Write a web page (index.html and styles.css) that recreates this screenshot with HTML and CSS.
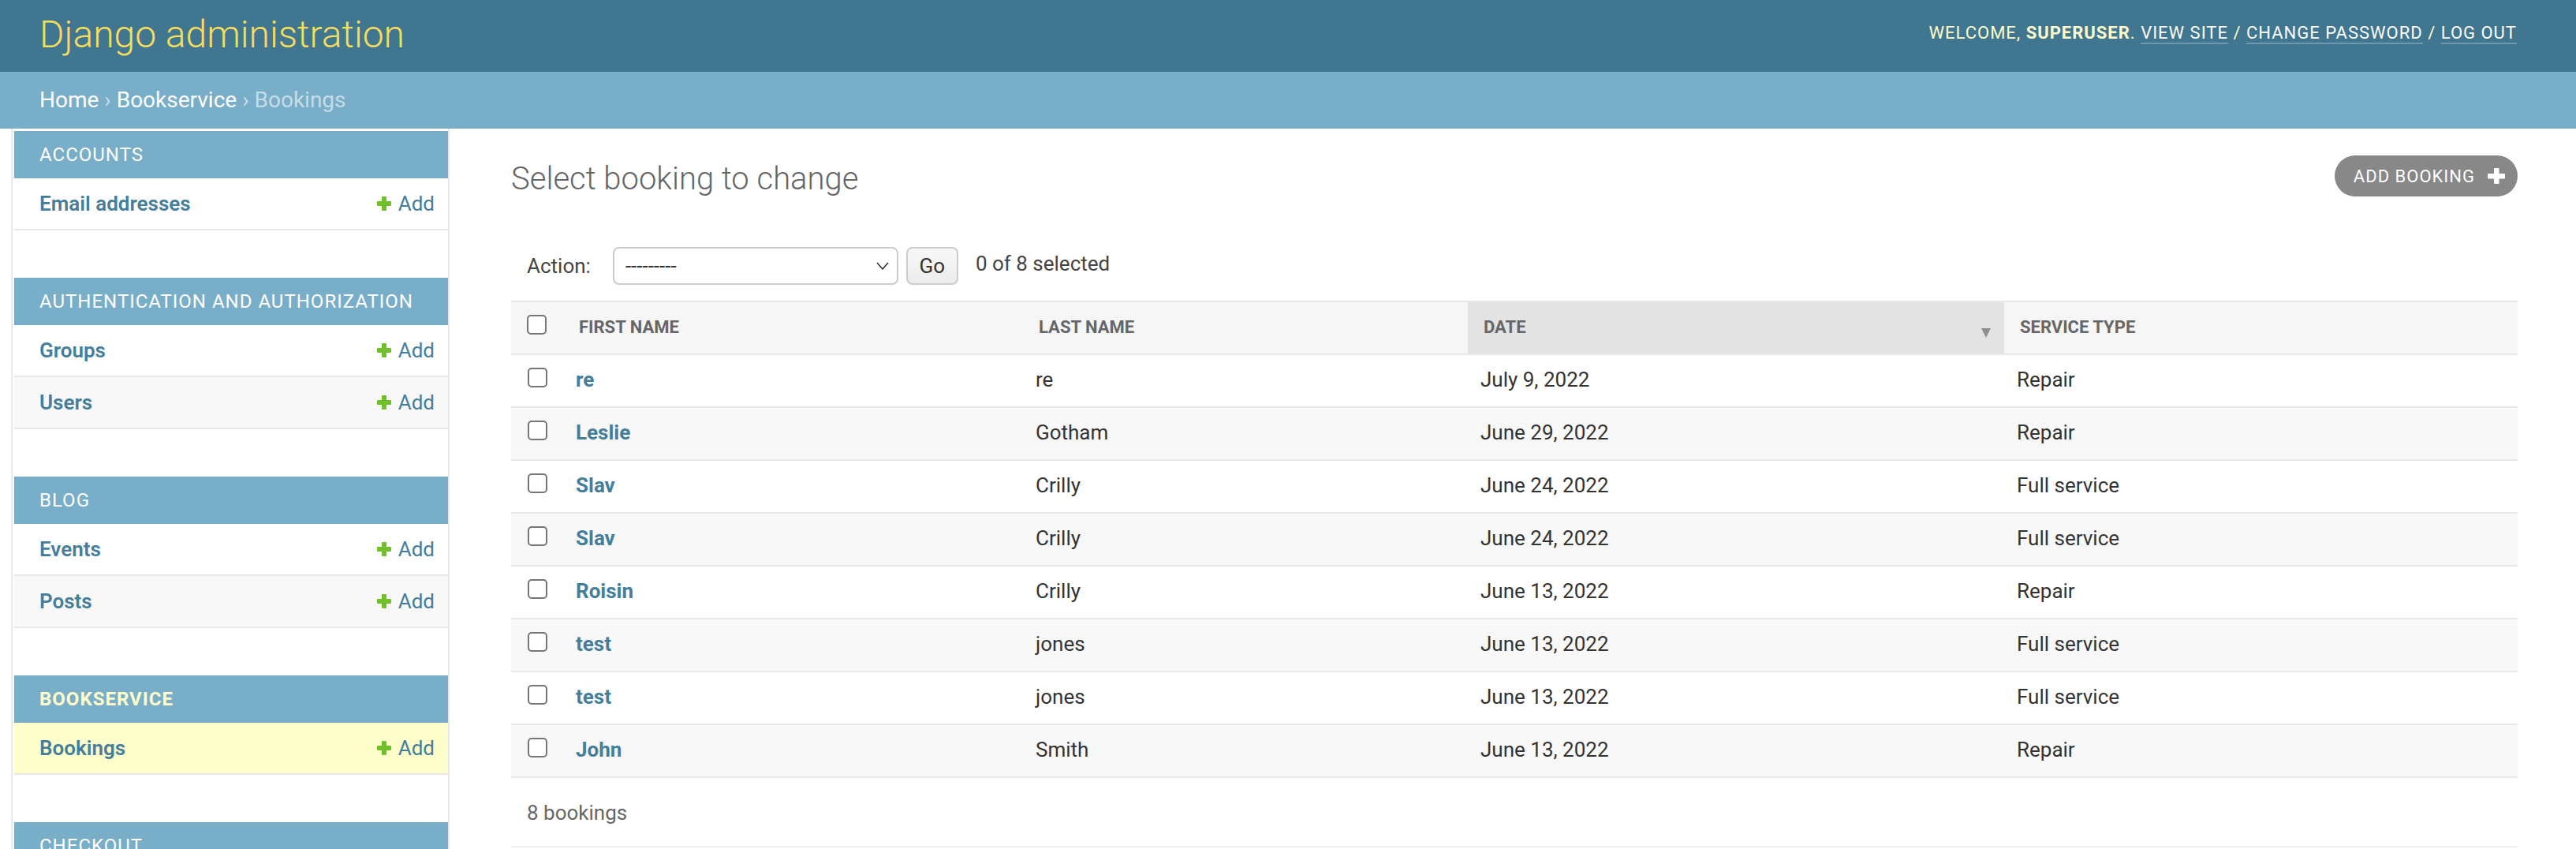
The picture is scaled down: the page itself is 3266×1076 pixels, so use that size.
FILE: index.html
```html
<!DOCTYPE html>
<html lang="en">
<head>
<meta charset="utf-8">
<title>Select booking to change | Django site admin</title>
<link rel="stylesheet" href="styles.css">
</head>
<body>
<header class="header">
  <h1 class="branding">Django administration</h1>
  <div class="user-tools">
    <span class="welcome">Welcome, <strong>superuser</strong>.</span>
    <a class="utl" href="#">View site</a> <span class="sep">/</span>
    <a class="utl" href="#">Change password</a> <span class="sep">/</span>
    <a class="utl" href="#">Log out</a>
  </div>
</header>
<nav class="breadcrumbs">
  <a href="#">Home</a> <span class="bsep">›</span> <a href="#">Bookservice</a> <span class="bsep">›</span> <span class="bcur">Bookings</span>
</nav>
<div class="main">
  <div class="toggle"></div>
  <aside class="sidebar">
    <div class="module">
      <div class="caption">Accounts</div>
      <div class="srow"><a class="sname" href="#">Email addresses</a><a class="addlink" href="#"><svg class="plus" viewBox="0 0 20 18"><rect x="7" y="0" width="6" height="18" rx="1"/><rect x="1" y="6" width="18" height="6" rx="1"/></svg>Add</a></div>
    </div>
    <div class="module">
      <div class="caption">Authentication and Authorization</div>
      <div class="srow"><a class="sname" href="#">Groups</a><a class="addlink" href="#"><svg class="plus" viewBox="0 0 20 18"><rect x="7" y="0" width="6" height="18" rx="1"/><rect x="1" y="6" width="18" height="6" rx="1"/></svg>Add</a></div>
      <div class="srow alt"><a class="sname" href="#">Users</a><a class="addlink" href="#"><svg class="plus" viewBox="0 0 20 18"><rect x="7" y="0" width="6" height="18" rx="1"/><rect x="1" y="6" width="18" height="6" rx="1"/></svg>Add</a></div>
    </div>
    <div class="module">
      <div class="caption">Blog</div>
      <div class="srow"><a class="sname" href="#">Events</a><a class="addlink" href="#"><svg class="plus" viewBox="0 0 20 18"><rect x="7" y="0" width="6" height="18" rx="1"/><rect x="1" y="6" width="18" height="6" rx="1"/></svg>Add</a></div>
      <div class="srow alt"><a class="sname" href="#">Posts</a><a class="addlink" href="#"><svg class="plus" viewBox="0 0 20 18"><rect x="7" y="0" width="6" height="18" rx="1"/><rect x="1" y="6" width="18" height="6" rx="1"/></svg>Add</a></div>
    </div>
    <div class="module">
      <div class="caption current">Bookservice</div>
      <div class="srow current-row"><a class="sname" href="#">Bookings</a><a class="addlink" href="#"><svg class="plus" viewBox="0 0 20 18"><rect x="7" y="0" width="6" height="18" rx="1"/><rect x="1" y="6" width="18" height="6" rx="1"/></svg>Add</a></div>
    </div>
    <div class="module">
      <div class="caption">Checkout</div>
    </div>
  </aside>
  <main class="content">
    <div class="title-row">
      <h1 class="page-title">Select booking to change</h1>
      <a class="addbtn" href="#">Add booking<svg class="wplus" viewBox="0 0 22 20"><rect x="8" y="0" width="6.5" height="20" rx="1"/><rect x="0" y="7" width="22" height="6.5" rx="1"/></svg></a>
    </div>
    <div class="actions">
      <span class="alabel">Action:</span>
      <div class="select"><span>---------</span><svg class="chev" viewBox="0 0 16 10"><polyline points="1,1 8,9 15,1" fill="none" stroke="#333" stroke-width="1.6"/></svg></div>
      <button class="go">Go</button>
      <span class="counter">0 of 8 selected</span>
    </div>
    <table class="results">
      <colgroup>
        <col class="c-cb"><col class="c-first"><col class="c-last"><col class="c-date"><col class="c-serv">
      </colgroup>
      <thead>
        <tr>
          <th class="th-cb"><span class="cb"></span></th>
          <th>First name</th>
          <th>Last name</th>
          <th class="sorted"><div class="sorted-in"><span>Date</span><span class="arrow"></span></div></th>
          <th>Service type</th>
        </tr>
      </thead>
      <tbody>
        <tr><td class="td-cb"><span class="cb"></span></td><td class="fn"><a href="#">re</a></td><td>re</td><td>July 9, 2022</td><td>Repair</td></tr>
        <tr class="row2"><td class="td-cb"><span class="cb"></span></td><td class="fn"><a href="#">Leslie</a></td><td>Gotham</td><td>June 29, 2022</td><td>Repair</td></tr>
        <tr><td class="td-cb"><span class="cb"></span></td><td class="fn"><a href="#">Slav</a></td><td>Crilly</td><td>June 24, 2022</td><td>Full service</td></tr>
        <tr class="row2"><td class="td-cb"><span class="cb"></span></td><td class="fn"><a href="#">Slav</a></td><td>Crilly</td><td>June 24, 2022</td><td>Full service</td></tr>
        <tr><td class="td-cb"><span class="cb"></span></td><td class="fn"><a href="#">Roisin</a></td><td>Crilly</td><td>June 13, 2022</td><td>Repair</td></tr>
        <tr class="row2"><td class="td-cb"><span class="cb"></span></td><td class="fn"><a href="#">test</a></td><td>jones</td><td>June 13, 2022</td><td>Full service</td></tr>
        <tr><td class="td-cb"><span class="cb"></span></td><td class="fn"><a href="#">test</a></td><td>jones</td><td>June 13, 2022</td><td>Full service</td></tr>
        <tr class="row2"><td class="td-cb"><span class="cb"></span></td><td class="fn"><a href="#">John</a></td><td>Smith</td><td>June 13, 2022</td><td>Repair</td></tr>
      </tbody>
    </table>
    <p class="paginator">8 bookings</p>
  </main>
</div>
</body>
</html>
```
FILE: styles.css
```css
* { box-sizing: border-box; }
html, body { margin: 0; padding: 0; }
body {
  font-family: Roboto, "Liberation Sans", sans-serif;
  color: #333;
  background: #fff;
  font-size: 26px;
}
a { text-decoration: none; }

/* header */
.header {
  display: flex;
  justify-content: space-between;
  align-items: flex-start;
  height: 91px;
  padding: 0 75px 0 50px;
  background: #417690;
}
.branding {
  margin: 15px 0 0;
  font-size: 48px;
  line-height: 58px;
  font-weight: 300;
  color: #f5dd5d;
}
.user-tools {
  margin-top: 27px;
  font-size: 22px;
  line-height: 30px;
  letter-spacing: 1px;
  text-transform: uppercase;
  color: #ffc;
  white-space: nowrap;
}
.user-tools strong { font-weight: 700; }
.utl {
  color: #fff;
  border-bottom: 2px solid rgba(255,255,255,0.25);
}
.sep { color: #ffc; }

/* breadcrumbs */
.breadcrumbs {
  background: #79aec8;
  padding: 20px 50px;
  font-size: 28px;
  line-height: 32px;
  color: #c4dce8;
}
.breadcrumbs a { color: #fff; }
.bsep { color: #c4dce8; }
.bcur { color: #c4dce8; }

/* layout */
.main { display: flex; align-items: stretch; }
.toggle {
  flex: 0 0 16px;
  border-right: 2px solid #e8e8e8;
}
.sidebar {
  flex: 0 0 554px;
  padding: 3px 0 0 2px;
  border-right: 2px solid #e8e8e8;
}
.module { margin-bottom: 60px; }
.caption {
  background: #79aec8;
  color: #fff;
  font-size: 24px;
  line-height: 28px;
  letter-spacing: 1px;
  text-transform: uppercase;
  padding: 16px 32px;
}
.caption.current { color: #ffc; font-weight: 700; }
.srow {
  display: flex;
  justify-content: space-between;
  align-items: center;
  padding: 16px 17px 16px 32px;
  line-height: 32px;
  border-bottom: 2px solid #e8e8e8;
  background: #fff;
}
.srow.alt { background: #f8f8f8; }
.srow.current-row { background: #ffc; }
.sname { color: #447e9b; font-weight: 600; font-size: 26px; }
.addlink {
  display: flex;
  align-items: center;
  color: #447e9b;
  font-size: 26px;
}
.plus { width: 20px; height: 18px; fill: #70bf2b; margin-right: 8px; }

/* content */
.content {
  flex: 1 1 auto;
  padding: 34px 74px 0 78px;
  min-width: 0;
}
.title-row {
  display: flex;
  justify-content: space-between;
  align-items: flex-start;
  margin-bottom: 42px;
}
.page-title {
  margin: 6px 0 0;
  font-size: 40px;
  line-height: 48px;
  font-weight: 300;
  color: #666;
}
.addbtn {
  display: flex;
  align-items: center;
  height: 52px;
  padding: 0 16px 0 24px;
  border-radius: 26px;
  background: #888;
  color: #fff;
  font-size: 22px;
  letter-spacing: 1px;
  text-transform: uppercase;
}
.wplus { width: 22px; height: 20px; fill: #fff; margin-left: 16px; }

.actions {
  display: flex;
  align-items: center;
  padding: 20px;
  height: 88px;
}
.alabel { color: #444; font-size: 26px; line-height: 33px; }
.select {
  margin-left: 28px;
  width: 362px;
  height: 48px;
  border: 2px solid #ccc;
  border-radius: 8px;
  background: #fff;
  display: flex;
  align-items: center;
  justify-content: space-between;
  padding: 0 10px 0 14px;
  font-size: 26px;
  color: #333;
}
.chev { width: 16px; height: 10px; }
.go {
  margin-left: 10px;
  width: 66px;
  height: 48px;
  border: 2px solid #ccc;
  border-radius: 8px;
  background: linear-gradient(#f8f8f8, #ececec);
  font-family: Roboto, "Liberation Sans", sans-serif;
  font-size: 26px;
  color: #333;
  padding: 0;
}
.counter { margin-left: 22px; margin-bottom: 6px; color: #444; font-size: 26px; }

/* table */
.results {
  width: 2544px;
  table-layout: fixed;
  border-collapse: collapse;
}
.c-cb { width: 66px; }
.c-first { width: 583px; }
.c-last { width: 564px; }
.c-date { width: 680px; }
.c-serv { width: 651px; }
.results th {
  background: #f6f6f6;
  border-top: 2px solid #e8e8e8;
  border-bottom: 2px solid #e8e8e8;
  height: 67px;
  padding: 0 20px;
  line-height: 63px;
  font-size: 22px;
  font-weight: 700;
  color: #666;
  text-transform: uppercase;
  text-align: left;
  vertical-align: top;
}
.results th.sorted { background: #e3e3e3; padding-right: 17px; }
.sorted-in { display: flex; justify-content: space-between; align-items: center; }
.arrow {
  width: 0; height: 0;
  border-left: 6px solid transparent;
  border-right: 6px solid transparent;
  border-top: 12px solid #8f8f8f;
  margin-top: 14px;
}
.results th.th-cb { padding: 16px 0 0 20px; line-height: 0; }
.cb {
  display: block;
  width: 25px;
  height: 25px;
  border: 2px solid #767676;
  border-radius: 5px;
  background: #fff;
}
.results td {
  padding: 15px 16px 17px;
  line-height: 33px;
  font-size: 26px;
  color: #333;
  border-bottom: 2px solid #e8e8e8;
  vertical-align: top;
  white-space: nowrap;
}
.results td.td-cb { padding: 16px 0 0 21px; }
.results tr.row2 td { background: #f8f8f8; }
.results td.fn a { color: #447e9b; font-weight: 700; }
.paginator {
  margin: 0;
  width: 2544px;
  padding: 22px 20px 20px;
  line-height: 44px;
  font-size: 26px;
  color: #666;
  border-bottom: 2px solid #eee;
}
```
